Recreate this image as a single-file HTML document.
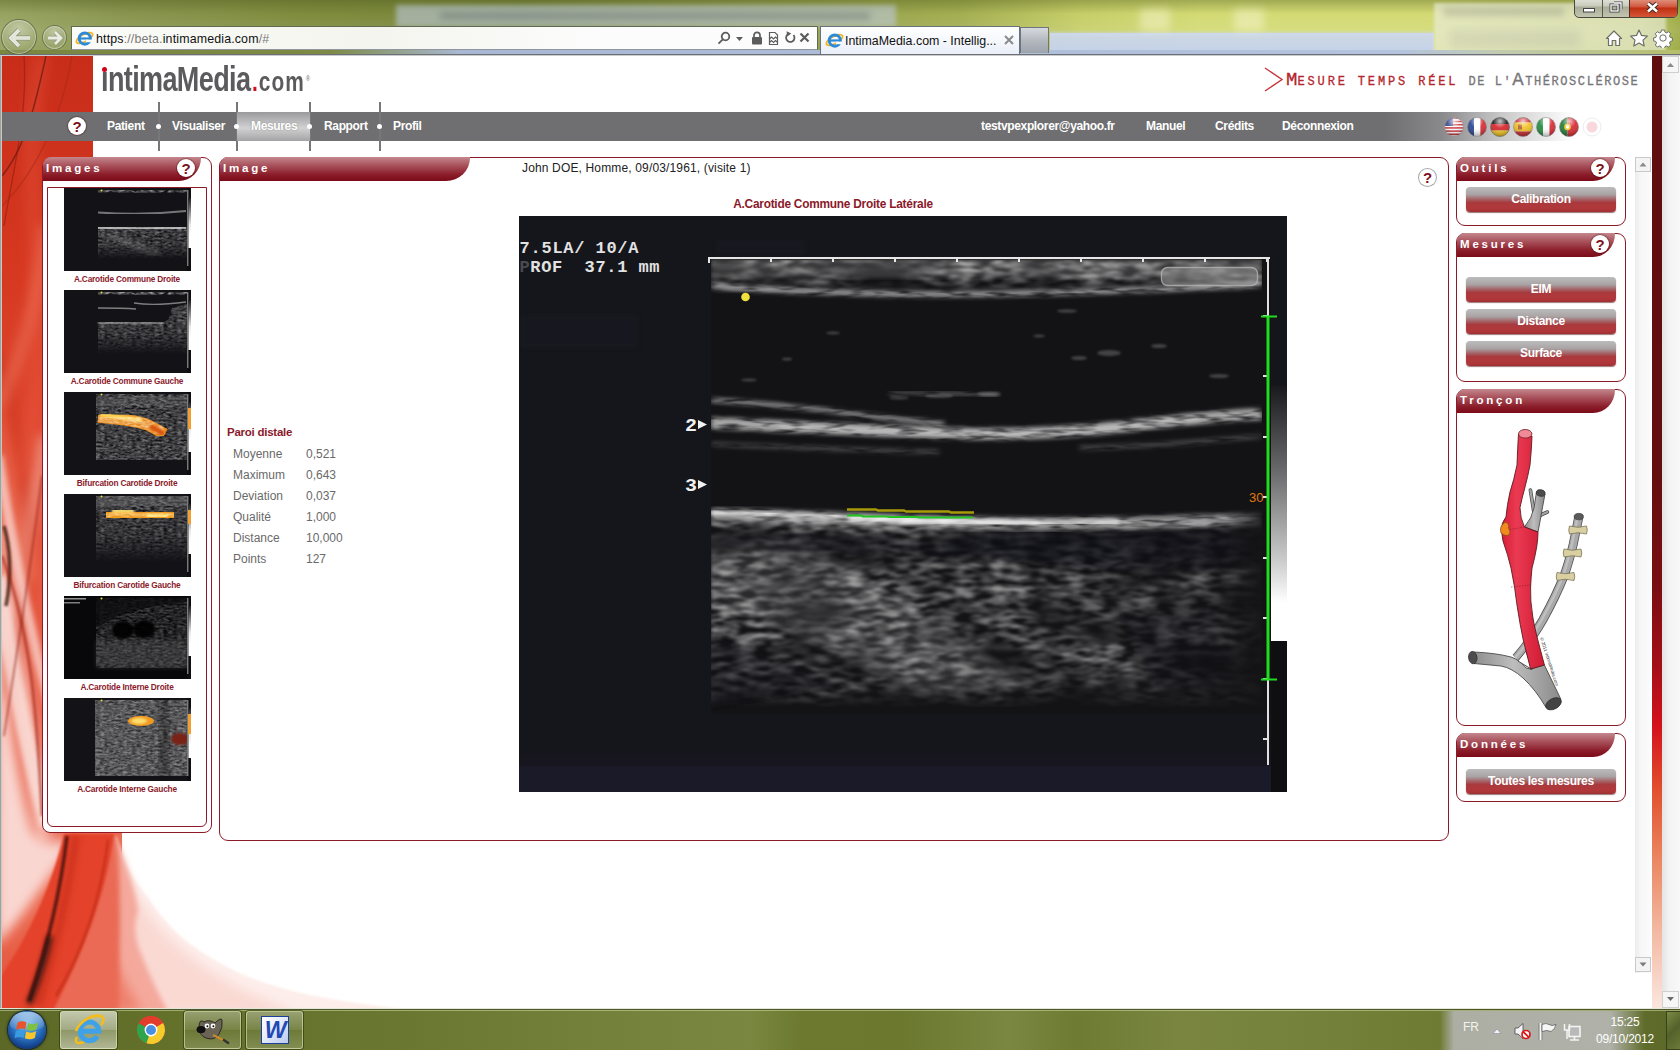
<!DOCTYPE html>
<html lang="fr">
<head>
<meta charset="utf-8">
<title>IntimaMedia.com - Intelligence</title>
<style>
html,body{margin:0;padding:0;}
body{width:1680px;height:1050px;overflow:hidden;position:relative;background:#7d8a3c;font-family:"Liberation Sans",sans-serif;}
.abs{position:absolute;}
#desk{left:0;top:0;width:1680px;height:56px;background:linear-gradient(90deg,#98a462 0px,#8a9650 120px,#7f8c3e 300px,#77853a 520px,#8f9a48 760px,#a3ae52 960px,#c6ce68 1080px,#d3da74 1200px,#d3da74 1430px,#bcc65e 1640px,#9eab48 1680px);}
#deskshade{left:0;top:0;width:1680px;height:56px;background:linear-gradient(180deg,rgba(70,80,20,.35) 0px,rgba(255,255,255,0) 14px,rgba(255,255,255,.08) 30px,rgba(255,255,255,0) 56px);}
#page{left:2px;top:56px;width:1650px;height:952px;background:#fff;overflow:hidden;}
#nav{left:2px;top:112px;width:1572px;height:29px;background:linear-gradient(90deg,#6f6f71 0px,#6f6f71 1383px,#8a8a8c 1440px,#c9c9ca 1500px,#ffffff 1572px);}
.navt{position:absolute;top:119px;color:#fff;font-weight:bold;font-size:12px;white-space:nowrap;letter-spacing:-0.35px;}
.sep{position:absolute;top:102px;width:2px;height:49px;background:#77777a;}
.dot{position:absolute;top:124px;width:5px;height:5px;border-radius:3px;background:#fff;}
.qm{position:absolute;width:18px;height:18px;border-radius:10px;background:#fff;color:#7d0f1d;font-weight:bold;font-size:15px;line-height:19px;text-align:center;box-shadow:0 0 1px 1px rgba(60,0,0,.35);}
.phead{position:absolute;height:24px;background:linear-gradient(180deg,#c4878d 0%,#a9525c 35%,#8a1b28 75%,#7b0b18 100%);color:#fff;font-weight:bold;font-size:11.500px;letter-spacing:2.800px;line-height:22px;padding-left:3px;box-sizing:border-box;white-space:nowrap;}
.panel{position:absolute;border:1px solid #8e1a28;background:#fff;box-sizing:border-box;}
.btn{position:absolute;height:25px;border-radius:4px;background:linear-gradient(180deg,#bcbcbc 0%,#a9a3a4 30%,#a56064 50%,#a83a3e 62%,#b1383b 85%,#a03034 100%);color:#fff;font-weight:bold;font-size:12px;line-height:24px;text-align:center;box-shadow:0 1px 1px rgba(90,30,30,.6);letter-spacing:-0.3px;}
.cap{position:absolute;left:0;width:160px;text-align:center;color:#8b1a2b;font-weight:bold;font-size:8.300px;letter-spacing:-0.200px;white-space:nowrap;}
.thumb{position:absolute;left:17px;width:127px;height:83px;background:#121216;overflow:hidden;}
.lbl{position:absolute;color:#6a6a6a;font-size:12px;white-space:nowrap;}
#task{left:0;top:1008px;width:1680px;height:42px;background:linear-gradient(90deg,#5c6826 0px,#63702a 150px,#6a7730 400px,#727f39 560px,#7a8740 750px,#6c792f 800px,#6b782e 900px,#7a8741 1010px,#6e7b32 1075px,#7a8640 1180px,#75823b 1300px,#6e7b33 1440px,#66732e 1560px,#5c6828 1680px);}
.tbtn{position:absolute;top:3px;width:57px;height:38px;border-radius:3px;border:1px solid rgba(230,240,190,.55);box-sizing:border-box;background:linear-gradient(180deg,rgba(255,255,255,.32),rgba(255,255,255,.12) 50%,rgba(255,255,255,.05) 51%,rgba(255,255,255,.18));box-shadow:0 0 0 1px rgba(40,50,10,.6);}
</style>
</head>
<body>
<svg width="0" height="0" style="position:absolute">
<defs>
<filter id="spk" x="0" y="0" width="100%" height="100%" color-interpolation-filters="sRGB">
<feTurbulence type="fractalNoise" baseFrequency="0.09 0.32" numOctaves="2" seed="7" result="n"/>
<feColorMatrix in="n" type="matrix" values="0 0 0 0 0  0 0 0 0 0  0 0 0 0 0  2.6 2.2 0 0 -1.85" result="a"/>
<feFlood flood-color="#e8e8e8"/><feComposite in2="a" operator="in" result="sp"/>
<feComposite in="sp" in2="SourceGraphic" operator="in"/>
</filter>
<filter id="spkT" x="0" y="0" width="100%" height="100%" color-interpolation-filters="sRGB">
<feTurbulence type="fractalNoise" baseFrequency="0.22 0.5" numOctaves="2" seed="3" result="n"/>
<feColorMatrix in="n" type="matrix" values="0 0 0 0 1  0 0 0 0 1  0 0 0 0 1  1.5 1.0 0 0 -0.78" result="a"/>
<feGaussianBlur in="a" stdDeviation=".55 .4" result="ab"/>
<feComposite in="ab" in2="SourceGraphic" operator="in"/>
</filter>
<filter id="b1"><feGaussianBlur stdDeviation="1"/></filter>
<filter id="b2"><feGaussianBlur stdDeviation="2"/></filter>
<filter id="b05"><feGaussianBlur stdDeviation=".6"/></filter>
<linearGradient id="gbar" x1="0" y1="0" x2="0" y2="1"><stop offset="0" stop-color="#1c1c20"/><stop offset=".7" stop-color="#e8e8e8"/><stop offset="1" stop-color="#fff"/></linearGradient>
<linearGradient id="fadeV" x1="0" y1="0" x2="0" y2="1"><stop offset="0" stop-color="#fff" stop-opacity=".95"/><stop offset=".6" stop-color="#fff" stop-opacity=".7"/><stop offset="1" stop-color="#fff" stop-opacity="0"/></linearGradient>
</defs>
</svg>
<!-- DESKTOP / AERO GLASS -->
<div id="desk" class="abs"></div>
<div id="deskshade" class="abs"></div>
<!-- BROWSER CHROME -->
<div class="abs" style="left:396px;top:5px;width:500px;height:22px;background:rgba(190,202,222,.6);filter:blur(2.500px);"></div>
<div class="abs" style="left:440px;top:12px;width:430px;height:8px;background:rgba(70,80,90,.28);filter:blur(3px);"></div>
<div class="abs" style="left:1050px;top:33px;width:384px;height:20px;background:linear-gradient(180deg,rgba(205,216,236,.9),rgba(196,210,234,1));"></div>
<div class="abs" style="left:1050px;top:30px;width:384px;height:6px;background:linear-gradient(180deg,rgba(205,216,236,0),rgba(205,216,236,.9));"></div>
<div class="abs" style="left:1434px;top:3px;width:232px;height:50px;background:rgba(236,238,226,.62);filter:blur(1.500px);"></div>
<div class="abs" style="left:1444px;top:8px;width:120px;height:8px;background:rgba(120,120,110,.28);filter:blur(3px);"></div>
<div class="abs" style="left:1450px;top:30px;width:130px;height:18px;background:rgba(170,170,160,.22);filter:blur(4px);"></div>
<div class="abs" style="left:1140px;top:9px;width:30px;height:22px;background:rgba(250,250,220,.45);filter:blur(4px);"></div>
<div class="abs" style="left:1234px;top:9px;width:30px;height:22px;background:rgba(250,250,220,.45);filter:blur(4px);"></div>
<div class="abs" style="left:0;top:50px;width:1680px;height:4px;background:linear-gradient(90deg,#7a8740 0,#7d8a44 330px,#a9b8d2 460px,#b4c3de 1400px,#c2cbb0 1500px,#b4be6a 1680px);"></div>
<div class="abs" style="left:0;top:54px;width:1680px;height:1px;background:#6c7076;"></div>
<div class="abs" style="left:0;top:55px;width:1680px;height:1px;background:#c9cbcd;"></div>
<div class="abs" style="left:0;top:56px;width:2px;height:952px;background:linear-gradient(90deg,#8d8f8a,#d9dbd8);"></div>
<!-- back / forward -->
<div class="abs" style="left:1px;top:19px;width:36px;height:36px;border-radius:18px;border:1px solid rgba(60,70,40,.55);box-sizing:border-box;background:radial-gradient(circle at 50% 25%,rgba(235,240,230,.45),rgba(160,172,130,.35) 70%);box-shadow:inset 0 0 0 1px rgba(255,255,255,.35);"></div>
<svg class="abs" style="left:8px;top:28px" width="24" height="20" viewBox="0 0 24 20"><path d="M11 2 L3 10 L11 18 M3.5 10 H22" fill="none" stroke="#8c9478" stroke-width="5.500" stroke-linejoin="miter" opacity=".8"/><path d="M11 2 L3 10 L11 18 M3.5 10 H22" fill="none" stroke="#e9ece2" stroke-width="3.600" stroke-linejoin="miter"/><path d="M11 2 L3 10 L11 18 M3.5 10 H22" fill="none" stroke="#c9cfc0" stroke-width="1" opacity=".5"/></svg>
<div class="abs" style="left:42px;top:25px;width:25px;height:25px;border-radius:13px;border:1px solid rgba(60,70,40,.5);box-sizing:border-box;background:radial-gradient(circle at 50% 25%,rgba(235,240,230,.45),rgba(160,172,130,.35) 70%);box-shadow:inset 0 0 0 1px rgba(255,255,255,.35);"></div>
<svg class="abs" style="left:46px;top:30px" width="18" height="16" viewBox="0 0 18 16"><path d="M9 2 L15 8 L9 14 M14.5 8 H2" fill="none" stroke="#8c9478" stroke-width="4.400" opacity=".8"/><path d="M9 2 L15 8 L9 14 M14.5 8 H2" fill="none" stroke="#e9ece2" stroke-width="2.800"/></svg>
<!-- address bar -->
<div class="abs" style="left:71px;top:26px;width:747px;height:24px;box-sizing:border-box;border:1px solid #5f6a52;border-bottom-color:#8e96a0;background:linear-gradient(90deg,#fbfbf8 0,#f4f5ee 300px,#fcfcfc 520px,#fdfdfd 747px);"></div>
<svg class="abs" style="left:75px;top:29px" width="19" height="18" viewBox="0 0 19 18"><ellipse cx="9.5" cy="9" rx="9" ry="3.6" transform="rotate(-28 9.5 9)" fill="none" stroke="#f2b620" stroke-width="1.8"/><circle cx="9.8" cy="9.6" r="5.6" fill="none" stroke="#2c8ad8" stroke-width="3"/><rect x="5" y="8.4" width="10" height="2.2" fill="#2c8ad8"/><rect x="11" y="10.6" width="6" height="2.6" fill="#fbfbf8"/></svg>
<div class="abs" style="left:96px;top:32px;font-size:12.400px;color:#7a7a7a;white-space:nowrap;letter-spacing:.15px;"><span style="color:#111">https</span>://beta.<span style="color:#111">intimamedia.com</span>/#</div>
<svg class="abs" style="left:716px;top:30px" width="100" height="16" viewBox="0 0 100 16"><g fill="none" stroke="#5c5c5c" stroke-width="1.8"><circle cx="9.5" cy="6.5" r="3.8"/><path d="M6.8 9.3 L2.5 13.6"/></g><path d="M20 7 h7 l-3.5 4z" fill="#5c5c5c"/><rect x="36" y="7" width="10" height="7.5" rx="1" fill="#5c5c5c"/><path d="M38 7 V5.3 a3 3 0 0 1 6 0 V7" fill="none" stroke="#5c5c5c" stroke-width="1.7"/><path d="M53.500 2.500 h5.500 l2.500 2.500 v9.500 h-8z" fill="#fff" stroke="#5c5c5c" stroke-width="1.2"/><path d="M53.500 9 l2-2 2 2 2-2 1.500 1.500 M53.500 12.500 l2-2 2 2 2-2 1.500 1.500" fill="none" stroke="#5c5c5c" stroke-width="1.200"/><path d="M77.500 5 a4.200 4.200 0 1 1 -4.800 -1.200" fill="none" stroke="#5c5c5c" stroke-width="1.800"/><path d="M70.500 1.200 l4.800 2.300 -4 3z" fill="#5c5c5c"/><path d="M84.500 3.500 l8 8 M92.500 3.500 l-8 8" stroke="#5c5c5c" stroke-width="2.200" fill="none"/></svg>
<!-- tab -->
<div class="abs" style="left:820px;top:26px;width:200px;height:28px;box-sizing:border-box;border:1px solid #6a7280;border-bottom:0;background:linear-gradient(180deg,#ffffff,#f3f6fb 60%,#e9eef7);"></div>
<svg class="abs" style="left:825px;top:31px" width="19" height="18" viewBox="0 0 19 18"><ellipse cx="9.500" cy="9" rx="9" ry="3.600" transform="rotate(-28 9.500 9)" fill="none" stroke="#f2b620" stroke-width="1.800"/><circle cx="9.800" cy="9.600" r="5.600" fill="none" stroke="#2c8ad8" stroke-width="3"/><rect x="5" y="8.400" width="10" height="2.200" fill="#2c8ad8"/><rect x="11" y="10.600" width="6" height="2.600" fill="#f8fafd"/></svg>
<div class="abs" style="left:845px;top:34px;font-size:12.400px;color:#111;white-space:nowrap;letter-spacing:0;">IntimaMedia.com - Intellig...</div>
<svg class="abs" style="left:1003px;top:34px" width="12" height="12" viewBox="0 0 12 12"><path d="M2 2 l8 8 M10 2 l-8 8" stroke="#8a8a8a" stroke-width="2" fill="none"/></svg>
<div class="abs" style="left:1020px;top:27px;width:29px;height:26px;box-sizing:border-box;border:1px solid #6e747c;border-bottom:0;background:linear-gradient(180deg,#d6dadf,#b4b9c0 50%,#9ea4ac);"></div>
<!-- window buttons -->
<div class="abs" style="left:1574px;top:-4px;width:104px;height:22px;box-sizing:border-box;border:1px solid #4a4a3c;border-radius:0 0 5px 5px;background:linear-gradient(180deg,#e8e9e0,#c9cbbd 45%,#a9ad98 50%,#c2c5b0);overflow:hidden;">
 <div class="abs" style="left:27px;top:0;width:1px;height:22px;background:#5a5a4a;"></div>
 <div class="abs" style="left:54px;top:0;width:50px;height:22px;border-left:1px solid #5a2a20;background:linear-gradient(180deg,#e3a795,#d2563c 45%,#bf2e12 50%,#d9603f);"></div>
</div>
<svg class="abs" style="left:1574px;top:0" width="104" height="18" viewBox="0 0 104 18"><rect x="9.500" y="8.500" width="11" height="3.500" fill="#fff" stroke="#444" stroke-width="1"/><g fill="none" stroke="#444" stroke-width="3"><rect x="37" y="5" width="7" height="6"/><path d="M40 3 h7 v6"/></g><g fill="none" stroke="#fff" stroke-width="1.300"><rect x="37" y="5" width="7" height="6"/><path d="M40 3 h7 v6"/></g><path d="M74 3.500 l9 8 M83 3.500 l-9 8" stroke="#3d2a25" stroke-width="4.500"/><path d="M74 3.500 l9 8 M83 3.500 l-9 8" stroke="#fff" stroke-width="2.600"/></svg>
<!-- home / star / gear -->
<svg class="abs" style="left:1604px;top:28px" width="70" height="20" viewBox="0 0 70 20"><g fill="#fff" stroke="#6b6f66" stroke-width="1.200" stroke-linejoin="round"><path d="M2.500 10.500 L10 3 L17.500 10.500 H15.500 V17.500 H11.800 V12.500 H8.200 V17.500 H4.500 V10.500 Z"/><path d="M35 2 l2.500 5.400 5.900 .700 -4.400 4 1.200 5.900 -5.200-3 -5.200 3 1.200-5.900 -4.400-4 5.900-.700z"/></g><g transform="translate(59 10)"><g fill="#fff" stroke="#6b6f66" stroke-width="1"><path d="M-1.500-8h3l.5 2.200 1.700.7 1.900-1.200 2.100 2.100-1.200 1.900.7 1.700 2.200.5v3l-2.200.5-.7 1.700 1.200 1.900-2.100 2.100-1.900-1.200-1.700.7-.5 2.200h-3l-.5-2.200-1.700-.7-1.900 1.200-2.100-2.100 1.200-1.900-.7-1.700-2.200-.5v-3l2.200-.5.7-1.700-1.200-1.900 2.100-2.100 1.900 1.200 1.700-.7z"/><circle r="3.200"/></g></g></svg>

<!-- PAGE -->
<div id="page" class="abs"><div class="abs" style="left:-2px;top:-56px;width:1680px;height:1050px;">
<!-- LEFT RED DECORATION -->
<svg class="abs" style="left:2px;top:56px" width="700" height="952" viewBox="0 0 700 952">
<defs>
<linearGradient id="lg1" gradientUnits="userSpaceOnUse" x1="0" y1="0" x2="0" y2="800"><stop offset="0" stop-color="#c82d1a"/><stop offset=".25" stop-color="#d5371f"/><stop offset=".5" stop-color="#e04a32"/><stop offset=".72" stop-color="#e65a42"/><stop offset=".9" stop-color="#e9654d"/><stop offset="1" stop-color="#ea6a52"/></linearGradient>
<linearGradient id="lg3" gradientUnits="userSpaceOnUse" x1="0" y1="760" x2="0" y2="952"><stop offset="0" stop-color="#ea6a52"/><stop offset=".5" stop-color="#ea6a52"/><stop offset=".8" stop-color="#e65a42"/><stop offset="1" stop-color="#e4503a"/></linearGradient>
<radialGradient id="rg1" gradientUnits="userSpaceOnUse" cx="520" cy="560" r="470"><stop offset="0" stop-color="#fff" stop-opacity="1"/><stop offset=".86" stop-color="#fff" stop-opacity="1"/><stop offset=".9" stop-color="#fdeeeb"/><stop offset="1" stop-color="#f7c9c1"/></radialGradient>
<filter id="bl6" filterUnits="userSpaceOnUse" x="-50" y="-50" width="800" height="1100"><feGaussianBlur stdDeviation="6"/></filter>
<filter id="bl3" filterUnits="userSpaceOnUse" x="-50" y="-50" width="800" height="1100"><feGaussianBlur stdDeviation="2.500"/></filter>
<filter id="bl1" filterUnits="userSpaceOnUse" x="-50" y="-50" width="800" height="1100"><feGaussianBlur stdDeviation="1.200"/></filter>
<filter id="bl14" filterUnits="userSpaceOnUse" x="-50" y="-50" width="800" height="1100"><feGaussianBlur stdDeviation="12"/></filter>
<clipPath id="lclip"><rect x="0" y="0" width="700" height="952"/></clipPath>
</defs>
<g clip-path="url(#lclip)">
<rect x="0" y="0" width="91" height="800" fill="url(#lg1)"/>
<rect x="0" y="760" width="120" height="192" fill="url(#lg3)"/>
<!-- crossing light / dark streaks in strip -->
<path d="M-5 470 C10 560 25 650 42 790" stroke="#f9d2cb" stroke-width="16" fill="none" opacity=".7" filter="url(#bl6)"/>
<path d="M-6 540 C4 640 14 720 30 775 C40 790 52 790 62 780 L64 800 C40 830 20 862 -6 890Z" fill="#fbe0db" opacity=".92" filter="url(#bl6)"/>
<path d="M42 380 C30 470 10 540 -6 600" stroke="#f6b9ae" stroke-width="12" fill="none" opacity=".6" filter="url(#bl6)"/>
<path d="M0 300 C30 420 30 520 8 640" stroke="#b3200f" stroke-width="8" fill="none" opacity=".35" filter="url(#bl6)"/>
<path d="M40 0 C10 120 60 250 20 420" stroke="#ee5e46" stroke-width="16" fill="none" opacity=".3" filter="url(#bl6)"/>
<path d="M44 170 C36 250 20 300 -4 350" stroke="#f07a62" stroke-width="12" fill="none" opacity=".55" filter="url(#bl6)"/>
<path d="M-6 330 C6 400 22 450 36 520 L-6 560Z" fill="#f08068" opacity=".45" filter="url(#bl6)"/>
<path d="M22 0 C26 60 10 120 2 170" stroke="#8a1a0e" stroke-width="1.300" fill="none" opacity=".55"/>
<path d="M0 120 C25 90 35 40 44 0" stroke="#6a1a10" stroke-width="1.500" fill="none" opacity=".7"/>
<path d="M0 150 C40 110 62 50 70 0" stroke="#a52a18" stroke-width="1.200" fill="none" opacity=".6"/>
<path d="M-4 400 C10 490 28 575 48 650" stroke="#fad8d2" stroke-width="10" fill="none" opacity=".75" filter="url(#bl3)"/>
<path d="M-4 520 C8 610 24 690 46 770" stroke="#fbe2dd" stroke-width="16" fill="none" opacity=".8" filter="url(#bl3)"/>
<path d="M2 470 C8 490 10 520 4 550" stroke="#2a0a06" stroke-width="3.500" fill="none" opacity=".75" filter="url(#bl1)"/>
<path d="M0 500 C30 580 35 660 40 760" stroke="#9a1c0e" stroke-width="3" fill="none" opacity=".55" filter="url(#bl1)"/>
<path d="M40 420 C28 520 14 600 2 680" stroke="#8a180c" stroke-width="2" fill="none" opacity=".5" filter="url(#bl1)"/>
<!-- bottom swoosh -->
<path d="M115 781 C122 810 134 826 146 842 C160 862 172 876 188 888 C210 904 232 916 260 926 C290 936 320 942 355 947 L420 956 L100 960 L100 781Z" fill="#fdeeeb" filter="url(#bl1)"/>
<path d="M115 790 C126 826 140 850 160 874 C185 900 215 922 250 938 L300 960 L100 960Z" fill="#fad9d3" filter="url(#bl6)"/>
<path d="M114 781 C126 815 134 835 136 855 C132 870 132 880 140 900 C150 925 158 940 166 956 L100 956Z" fill="#f4a99c" filter="url(#bl3)"/>
<path d="M110 900 C120 920 130 940 140 956 L100 956Z" fill="#ee806c" filter="url(#bl6)"/>
<path d="M103 778 L115 778 C119 830 118 880 117 956 L48 956 C76 900 94 840 103 778Z" fill="#ea6a55" filter="url(#bl3)"/>
<path d="M62 778 L112 778 C104 840 80 900 50 956 L-4 956 L-4 925 C26 880 48 835 62 778Z" fill="#e4432b" filter="url(#bl1)"/>
<path d="M106 784 C98 850 78 900 54 940" stroke="#a3200f" stroke-width="1.800" fill="none" opacity=".6" filter="url(#bl1)"/>
<path d="M74 780 C66 840 52 895 36 950" stroke="#c22a14" stroke-width="9" fill="none" opacity=".5" filter="url(#bl3)"/>
<path d="M65 780 C58 840 44 895 27 945" stroke="#3a0e08" stroke-width="3.500" fill="none" opacity=".8" filter="url(#bl1)"/>
<path d="M48 880 C43 905 36 925 27 948" stroke="#1a0a08" stroke-width="6" fill="none" opacity=".8" filter="url(#bl3)"/>
</g>
</svg>
<div id="nav" class="abs"></div>
<!-- LOGO -->
<div class="abs" style="left:101px;top:59px;color:#5b5b5d;font-weight:bold;white-space:nowrap;transform-origin:0 0;transform:scaleX(.772);line-height:40px;font-size:35px;letter-spacing:-.8px;">ıntimaMedia<span style="font-size:27px;letter-spacing:1.4px;margin-left:2px;"><span style="color:#cf1020;">.</span>com</span><span style="font-size:8px;letter-spacing:0;position:relative;top:-10px;left:1px;font-weight:normal;color:#777;">®</span></div>
<div class="abs" style="left:102px;top:67px;width:5px;height:5px;border-radius:3px;background:#d0021b;"></div>
<!-- TAGLINE -->
<svg class="abs" style="left:1262px;top:66px" width="24" height="28" viewBox="0 0 24 28"><path d="M3 2 L20 13.500 L3 25" fill="none" stroke="#c8323a" stroke-width="1.400"/></svg>
<div class="abs" style="left:1286px;top:70px;font-family:'Liberation Mono',monospace;white-space:nowrap;color:#b3262e;font-size:12px;letter-spacing:2.850px;line-height:20px;-webkit-text-stroke:.3px currentColor;"><span style="font-size:19px;letter-spacing:.1px;">M</span>ESURE TEMPS RÉEL <span style="color:#77777a;letter-spacing:1.570px;">DE L'<span style="font-size:19px;">A</span>THÉROSCLÉROSE</span></div>
<!-- NAV ITEMS -->
<div class="sep" style="left:158px"></div><div class="sep" style="left:236px"></div><div class="sep" style="left:309px"></div><div class="sep" style="left:379px"></div>
<div class="abs" style="left:237px;top:112px;width:73px;height:29px;background:linear-gradient(180deg,#9a9a9c,#c7c7c9 45%,#d2d2d3 55%,#a3a3a5);"></div>
<div class="dot" style="left:156px"></div><div class="dot" style="left:234px"></div><div class="dot" style="left:307px"></div><div class="dot" style="left:377px"></div>
<div class="qm" style="left:68px;top:117px;">?</div>
<div class="navt" style="left:107px">Patient</div>
<div class="navt" style="left:172px">Visualiser</div>
<div class="navt" style="left:251px;text-shadow:0 0 2px #888;">Mesures</div>
<div class="navt" style="left:324px">Rapport</div>
<div class="navt" style="left:393px">Profil</div>
<div class="navt" style="left:981px">testvpexplorer@yahoo.fr</div>
<div class="navt" style="left:1146px">Manuel</div>
<div class="navt" style="left:1215px">Crédits</div>
<div class="navt" style="left:1282px">Déconnexion</div>
<!-- FLAGS -->
<svg class="abs" style="left:1442px;top:115px" width="164" height="24" viewBox="0 0 164 24">
<defs>
<clipPath id="fc"><circle cx="12" cy="12" r="9.500"/></clipPath>
<radialGradient id="gl" cx=".5" cy=".2" r=".8"><stop offset="0" stop-color="#fff" stop-opacity=".75"/><stop offset=".45" stop-color="#fff" stop-opacity=".1"/><stop offset="1" stop-color="#000" stop-opacity=".35"/></radialGradient>
</defs>
<g clip-path="url(#fc)"><rect x="2" y="2" width="20" height="20" fill="#fff"/><g fill="#c8343c"><rect x="2" y="2.500" width="20" height="1.600"/><rect x="2" y="5.700" width="20" height="1.600"/><rect x="2" y="8.900" width="20" height="1.600"/><rect x="2" y="12.100" width="20" height="1.600"/><rect x="2" y="15.300" width="20" height="1.600"/><rect x="2" y="18.500" width="20" height="1.600"/></g><rect x="2" y="2" width="9" height="9" fill="#3a4a8c"/></g><circle cx="12" cy="12" r="9.500" fill="url(#gl)" stroke="#8a8a8a" stroke-width=".600"/>
<g transform="translate(23 0)"><g clip-path="url(#fc)"><rect x="2" y="2" width="7" height="20" fill="#24408e"/><rect x="9" y="2" width="6.500" height="20" fill="#fff"/><rect x="15.500" y="2" width="7" height="20" fill="#d8242c"/></g><circle cx="12" cy="12" r="9.500" fill="url(#gl)" stroke="#8a8a8a" stroke-width=".600"/></g>
<g transform="translate(46 0)"><g clip-path="url(#fc)"><rect x="2" y="2" width="20" height="7" fill="#1a1a1a"/><rect x="2" y="9" width="20" height="6.500" fill="#d41f26"/><rect x="2" y="15.500" width="20" height="7" fill="#f2c41c"/></g><circle cx="12" cy="12" r="9.500" fill="url(#gl)" stroke="#6a6a6a" stroke-width=".600"/></g>
<g transform="translate(69 0)"><g clip-path="url(#fc)"><rect x="2" y="2" width="20" height="5.500" fill="#c8242c"/><rect x="2" y="7.500" width="20" height="9" fill="#f2c020"/><rect x="2" y="16.500" width="20" height="6" fill="#c8242c"/><rect x="7" y="9.500" width="4" height="5" fill="#b0602c"/></g><circle cx="12" cy="12" r="9.500" fill="url(#gl)" stroke="#8a8a8a" stroke-width=".600"/></g>
<g transform="translate(92 0)"><g clip-path="url(#fc)"><rect x="2" y="2" width="7" height="20" fill="#1f8a3c"/><rect x="9" y="2" width="6.500" height="20" fill="#fff"/><rect x="15.500" y="2" width="7" height="20" fill="#d8242c"/></g><circle cx="12" cy="12" r="9.500" fill="url(#gl)" stroke="#8a8a8a" stroke-width=".600"/></g>
<g transform="translate(115 0)"><g clip-path="url(#fc)"><rect x="2" y="2" width="8.500" height="20" fill="#1f7a34"/><rect x="10.500" y="2" width="12" height="20" fill="#d8242c"/><circle cx="10.500" cy="12" r="3.300" fill="#f2c820"/><circle cx="10.500" cy="12" r="1.700" fill="#fff"/></g><circle cx="12" cy="12" r="9.500" fill="url(#gl)" stroke="#8a8a8a" stroke-width=".600"/></g>
<g transform="translate(138 0)"><circle cx="12" cy="12" r="9" fill="#fff" stroke="#ececec" stroke-width="1"/><circle cx="12" cy="12" r="5.500" fill="#f8d8dc"/></g>
</svg>

<!-- LEFT PANEL : IMAGES -->
<div class="panel" style="left:42px;top:157px;width:170px;height:676px;border-radius:9px 9px 8px 8px;"></div>
<div class="phead" style="left:43px;top:157px;width:158px;border-radius:8px 0 22px 0/8px 0 23px 0;">Images</div>
<div class="qm" style="left:177px;top:159px;">?</div>
<div class="panel" style="left:47px;top:187px;width:160px;height:640px;border-radius:0 0 6px 6px;overflow:hidden;"><div class="abs" style="left:-1px;top:0px;width:160px;height:640px;">
<div class="thumb" style="top:0px"><svg width="127" height="83" viewBox="0 0 127 83"><rect width="127" height="83" fill="#131317"/>
<rect x="34" y="39" width="89" height="32" fill="url(#fadeV)" filter="url(#spkT)" opacity=".42"/>
<rect x="34" y="2" width="89" height="2.500" fill="#fff" filter="url(#spkT)" opacity=".5"/>
<path d="M34 24.500 Q80 27.500 122 23" stroke="#c8c8c8" stroke-width="2" fill="none" filter="url(#b05)" opacity=".55"/>
<path d="M34 39.500 Q75 41.500 122 39.500" stroke="#e6e6e6" stroke-width="2.600" fill="none" filter="url(#b05)" opacity=".7"/>
<path d="M40 46 L95 66" stroke="#ddd" stroke-width="7" fill="none" filter="url(#b2)" opacity=".16"/>
<circle cx="37.500" cy="2.500" r="1" fill="#e8e040"/><rect x="123" y="0" width="4" height="83" fill="#0e0e10"/><rect x="123.300" y="2" width="1" height="76" fill="#a8a8a8"/><rect x="124.500" y="10" width="2.500" height="38" fill="url(#gbar)"/><rect x="124.500" y="48" width="2.500" height="12" fill="#fff"/></svg></div><div class="cap" style="top:86px">A.Carotide Commune Droite</div>
<div class="thumb" style="top:102px"><svg width="127" height="83" viewBox="0 0 127 83"><rect width="127" height="83" fill="#131317"/>
<path d="M34 32 H100 L104 30 L108 18 L123 14 V64 H34Z" fill="url(#fadeV)" filter="url(#spkT)" opacity=".45"/>
<rect x="34" y="2" width="89" height="2.500" fill="#fff" filter="url(#spkT)" opacity=".6"/>
<path d="M34 18 Q60 18 72 19 M70 13 Q90 16 122 12" stroke="#9a9a9a" stroke-width="1.300" fill="none" filter="url(#b05)" opacity=".8"/>
<path d="M34 33 Q70 32 100 33" stroke="#d8d8d8" stroke-width="2.600" fill="none" filter="url(#b1)" opacity=".6"/>
<circle cx="37.500" cy="2.500" r="1" fill="#e8e040"/><rect x="123" y="0" width="4" height="83" fill="#0e0e10"/><rect x="123.300" y="2" width="1" height="76" fill="#a8a8a8"/><rect x="124.500" y="10" width="2.500" height="38" fill="url(#gbar)"/><rect x="124.500" y="48" width="2.500" height="12" fill="#fff"/></svg></div><div class="cap" style="top:188px">A.Carotide Commune Gauche</div>
<div class="thumb" style="top:204px"><svg width="127" height="83" viewBox="0 0 127 83"><rect width="127" height="83" fill="#131317"/>
<rect x="32" y="2" width="91" height="66" fill="#fff" filter="url(#spkT)" opacity=".4"/>
<rect x="32" y="4" width="91" height="10" fill="#8a8a8a" opacity=".22"/>
<path d="M34 25 C55 27 72 28 84 33 L101 42" stroke="#e88a1c" stroke-width="11.500" fill="none" filter="url(#b05)"/>
<path d="M36 23 C55 25 68 26 78 29" stroke="#ffd45a" stroke-width="4.500" fill="none" filter="url(#b1)"/>
<path d="M34 25 C55 27 72 28 84 33 L101 42" stroke="#a03008" stroke-width="10" fill="none" filter="url(#spkT)" opacity=".55"/>
<path d="M86 34 L100 42" stroke="#d85410" stroke-width="5" fill="none" filter="url(#b1)"/>
<circle cx="37.500" cy="2.500" r="1" fill="#e8e040"/><rect x="123" y="0" width="4" height="83" fill="#0e0e10"/><rect x="123.300" y="2" width="1" height="76" fill="#a8a8a8"/><rect x="124.500" y="10" width="2.500" height="38" fill="url(#gbar)"/><rect x="124.500" y="48" width="2.500" height="12" fill="#fff"/><rect x="124" y="16" width="3" height="21" fill="#f0a030"/></svg></div><div class="cap" style="top:290px">Bifurcation Carotide Droite</div>
<div class="thumb" style="top:306px"><svg width="127" height="83" viewBox="0 0 127 83"><rect width="127" height="83" fill="#131317"/>
<rect x="32" y="2" width="91" height="66" fill="url(#fadeV)" filter="url(#spkT)" opacity=".42"/>
<rect x="32" y="2" width="91" height="10" fill="#8a8a8a" opacity=".3"/>
<path d="M42 19 H72 L78 23 H110" stroke="#ee9a1c" stroke-width="11" fill="none" filter="url(#b05)"/>
<path d="M48 17 H70 M82 22 H104" stroke="#ffe070" stroke-width="4" fill="none" filter="url(#b1)"/>
<path d="M42 19 H72 L78 23 H110" stroke="#a03008" stroke-width="10" fill="none" filter="url(#spkT)" opacity=".45"/>
<circle cx="37.500" cy="2.500" r="1" fill="#e8e040"/><rect x="123" y="0" width="4" height="83" fill="#0e0e10"/><rect x="123.300" y="2" width="1" height="76" fill="#a8a8a8"/><rect x="124.500" y="10" width="2.500" height="38" fill="url(#gbar)"/><rect x="124.500" y="48" width="2.500" height="12" fill="#fff"/><rect x="124" y="16" width="3" height="14" fill="#f0a030"/></svg></div><div class="cap" style="top:392px">Bifurcation Carotide Gauche</div>
<div class="thumb" style="top:408px"><svg width="127" height="83" viewBox="0 0 127 83"><rect width="127" height="83" fill="#08080a"/>
<rect x="32" y="2" width="91" height="70" fill="#fff" filter="url(#spkT)" opacity=".24"/>
<rect x="32" y="44" width="91" height="28" fill="#888" filter="url(#b2)" opacity=".22"/>
<ellipse cx="59" cy="34" rx="11" ry="9" fill="#050506" filter="url(#b1)" opacity=".9"/><ellipse cx="80" cy="33" rx="11" ry="9" fill="#050506" filter="url(#b1)" opacity=".9"/>
<path d="M36 30 Q60 12 123 6 V2 H32 V30Z" fill="#0a0a0c" opacity=".7"/>
<rect x="0" y="2" width="22" height="1.500" fill="#cfcfcf" opacity=".7"/><rect x="0" y="6" width="16" height="1.500" fill="#cfcfcf" opacity=".6"/>
<circle cx="37.500" cy="2.500" r="1" fill="#e8e040"/><rect x="123" y="0" width="4" height="83" fill="#0e0e10"/><rect x="123.300" y="2" width="1" height="76" fill="#a8a8a8"/><rect x="124.500" y="10" width="2.500" height="38" fill="url(#gbar)"/><rect x="124.500" y="48" width="2.500" height="12" fill="#fff"/></svg></div><div class="cap" style="top:494px">A.Carotide Interne Droite</div>
<div class="thumb" style="top:510px"><svg width="127" height="83" viewBox="0 0 127 83"><rect width="127" height="83" fill="#131317"/>
<rect x="31" y="2" width="92" height="76" fill="#fff" filter="url(#spkT)" opacity=".5"/>
<rect x="31" y="2" width="92" height="76" fill="#777" opacity=".3"/>
<rect x="95" y="2" width="10" height="76" fill="#111" opacity=".35" filter="url(#b2)"/>
<ellipse cx="77" cy="23" rx="13" ry="5" fill="#f09a20" filter="url(#b05)"/><ellipse cx="75" cy="23" rx="8" ry="3" fill="#ffe070" filter="url(#b1)"/>
<ellipse cx="116" cy="41" rx="9" ry="6" fill="#7a2414" filter="url(#b1)"/>
<circle cx="37.500" cy="2.500" r="1" fill="#e8e040"/><rect x="123" y="0" width="4" height="83" fill="#0e0e10"/><rect x="123.300" y="2" width="1" height="76" fill="#a8a8a8"/><rect x="124.500" y="10" width="2.500" height="38" fill="url(#gbar)"/><rect x="124.500" y="48" width="2.500" height="12" fill="#fff"/><rect x="124" y="16" width="3" height="20" fill="#f0a030"/></svg></div><div class="cap" style="top:596px">A.Carotide Interne Gauche</div>
</div></div>

<!-- MAIN PANEL : IMAGE -->
<div class="panel" style="left:219px;top:157px;width:1230px;height:684px;border-radius:9px 9px 9px 9px;"></div>
<div class="phead" style="left:220px;top:157px;width:250px;border-radius:8px 0 24px 0/8px 0 23px 0;">Image</div>
<div class="abs" style="left:522px;top:161px;font-size:12px;color:#222;white-space:nowrap;letter-spacing:.15px;">John DOE, Homme, 09/03/1961, (visite 1)</div>
<div class="qm" style="left:1419px;top:169px;width:17px;height:17px;font-size:15px;line-height:18px;box-shadow:0 0 0 1px #a8a8a8;">?</div>
<div class="abs" style="left:633px;top:197px;width:400px;text-align:center;font-size:11.900px;font-weight:bold;color:#8b1a2b;white-space:nowrap;letter-spacing:-0.25px;">A.Carotide Commune Droite Latérale</div>
<div class="abs" style="left:227px;top:426px;font-size:11.500px;font-weight:bold;color:#8b1a2b;white-space:nowrap;letter-spacing:-0.25px;">Paroi distale</div>
<div class="lbl" style="left:233px;top:447px">Moyenne</div><div class="lbl" style="left:306px;top:447px">0,521</div>
<div class="lbl" style="left:233px;top:468px">Maximum</div><div class="lbl" style="left:306px;top:468px">0,643</div>
<div class="lbl" style="left:233px;top:489px">Deviation</div><div class="lbl" style="left:306px;top:489px">0,037</div>
<div class="lbl" style="left:233px;top:510px">Qualité</div><div class="lbl" style="left:306px;top:510px">1,000</div>
<div class="lbl" style="left:233px;top:531px">Distance</div><div class="lbl" style="left:306px;top:531px">10,000</div>
<div class="lbl" style="left:233px;top:552px">Points</div><div class="lbl" style="left:306px;top:552px">127</div>
<!--USBEGIN--><svg class="abs" style="left:519px;top:216px" width="768" height="576" viewBox="0 0 768 576" font-family="'Liberation Mono',monospace">
<defs>
<filter id="usn" x="0" y="0" width="100%" height="100%" color-interpolation-filters="sRGB">
<feTurbulence type="fractalNoise" baseFrequency="0.055 0.17" numOctaves="2" seed="11" result="n1"/>
<feColorMatrix in="n1" type="matrix" values="0 0 0 0 1  0 0 0 0 1  0 0 0 0 1  2.4 0 0 0 -0.78" result="a1"/>
<feTurbulence type="fractalNoise" baseFrequency="0.012 0.028" numOctaves="2" seed="5" result="n2"/>
<feColorMatrix in="n2" type="matrix" values="0 0 0 0 1  0 0 0 0 1  0 0 0 0 1  2.2 0 0 0 -0.35" result="a2"/>
<feComposite in="a1" in2="a2" operator="arithmetic" k1="1" k2="0" k3="0" k4="0" result="m"/>
<feGaussianBlur in="m" stdDeviation="1.6 1" result="mb"/>
<feComposite in="mb" in2="SourceGraphic" operator="in"/>
</filter>
<filter id="usw" x="-5%" y="-80%" width="110%" height="260%" color-interpolation-filters="sRGB">
<feTurbulence type="fractalNoise" baseFrequency="0.045 0.22" numOctaves="2" seed="21" result="n1"/>
<feColorMatrix in="n1" type="matrix" values="0 0 0 0 1  0 0 0 0 1  0 0 0 0 1  2.2 0 0 0 -0.25" result="a1"/>
<feGaussianBlur in="SourceGraphic" stdDeviation="2.4 1.9" result="sb"/>
<feComposite in="a1" in2="sb" operator="in" result="r"/>
<feGaussianBlur in="r" stdDeviation="1.1 .6"/>
</filter>
<linearGradient id="tis" x1="0" y1="0" x2="0" y2="1"><stop offset="0" stop-color="#fff" stop-opacity=".75"/><stop offset=".06" stop-color="#fff" stop-opacity=".5"/><stop offset=".14" stop-color="#fff" stop-opacity=".36"/><stop offset=".3" stop-color="#fff" stop-opacity=".55"/><stop offset=".75" stop-color="#fff" stop-opacity=".52"/><stop offset=".9" stop-color="#fff" stop-opacity=".36"/><stop offset="1" stop-color="#fff" stop-opacity="0"/></linearGradient>
<linearGradient id="topb" x1="0" y1="0" x2="0" y2="1"><stop offset="0" stop-color="#fff" stop-opacity=".75"/><stop offset=".45" stop-color="#fff" stop-opacity=".6"/><stop offset=".7" stop-color="#fff" stop-opacity=".3"/><stop offset="1" stop-color="#fff" stop-opacity="0"/></linearGradient>
<linearGradient id="gbar2" x1="0" y1="0" x2="0" y2="1"><stop offset="0" stop-color="#1a1a1e"/><stop offset=".35" stop-color="#6e6e70"/><stop offset=".7" stop-color="#d0d0d0"/><stop offset=".85" stop-color="#fff"/><stop offset="1" stop-color="#fff"/></linearGradient>
<linearGradient id="rfade" x1="0" y1="0" x2="1" y2="0"><stop offset="0" stop-color="#131315" stop-opacity="0"/><stop offset=".6" stop-color="#131315" stop-opacity=".55"/><stop offset="1" stop-color="#131315" stop-opacity=".85"/></linearGradient>
<clipPath id="usclip"><rect x="192" y="43" width="551" height="452"/></clipPath>
</defs>
<rect width="768" height="576" fill="#15161b"/>
<rect x="192" y="42" width="560" height="456" fill="#131315"/>
<rect x="0" y="0" width="768" height="42" fill="#15151c"/>
<rect x="0" y="550" width="768" height="26" fill="#1b1a28"/><rect x="0" y="538" width="768" height="12" fill="#17161f"/><rect x="1" y="99" width="118" height="33" fill="#1c1c27" opacity=".4" filter="url(#b2)"/><rect x="198" y="24" width="88" height="14" fill="#1c1c28" opacity=".4" filter="url(#b2)"/>

<g clip-path="url(#usclip)">
<!-- top tissue band -->
<rect x="192" y="44" width="551" height="34" fill="url(#topb)" filter="url(#usn)"/>
<rect x="192" y="42" width="551" height="20" fill="#9a9a9a" opacity=".28" filter="url(#b2)"/>
<path d="M192 70 Q330 80 470 78 T743 68" stroke="#fff" stroke-width="6" fill="none" filter="url(#usw)" opacity=".55"/>
<!-- scattered faint echoes in lumen region above near wall -->
<g fill="#fff" filter="url(#b1)" opacity=".2"><ellipse cx="314" cy="117" rx="7" ry="1.500"/><ellipse cx="548" cy="95" rx="10" ry="1.800"/><ellipse cx="590" cy="137" rx="12" ry="3"/><ellipse cx="640" cy="130" rx="8" ry="2"/><ellipse cx="560" cy="142" rx="8" ry="2"/><ellipse cx="268" cy="143" rx="5" ry="1.500"/><ellipse cx="230" cy="164" rx="8" ry="1.500"/><ellipse cx="420" cy="180" rx="14" ry="2"/><ellipse cx="470" cy="178" rx="12" ry="2"/><ellipse cx="380" cy="182" rx="10" ry="1.500"/><ellipse cx="700" cy="160" rx="10" ry="2"/><ellipse cx="520" cy="120" rx="6" ry="1.500"/></g>
<!-- thin line above near wall -->
<path d="M192 184 Q260 188 320 196 T425 207" stroke="#fff" stroke-width="5" fill="none" filter="url(#usw)" opacity=".5"/>
<path d="M370 178 Q420 176 480 179" stroke="#fff" stroke-width="3" fill="none" filter="url(#usw)" opacity=".35"/>
<!-- near wall -->
<path d="M192 207 C290 211 390 217 467 218 C530 218 570 214 610 210 C650 205 700 200 743 198" stroke="#fff" stroke-width="12" fill="none" filter="url(#usw)" opacity=".62"/>
<path d="M260 210 C330 213 400 217 467 218 C530 218 570 214 610 210 C640 206 660 204 680 202" stroke="#fff" stroke-width="3" fill="none" filter="url(#b2)" opacity=".4"/>
<path d="M192 228 Q300 233 420 236" stroke="#fff" stroke-width="5" fill="none" filter="url(#usw)" opacity=".2"/>
<path d="M560 232 Q640 230 743 220" stroke="#fff" stroke-width="5" fill="none" filter="url(#usw)" opacity=".2"/>
<!-- tissue below far wall -->
<path d="M192 295 C300 298 420 304 520 305 C600 305 680 302 743 300 V492 H192Z" fill="url(#tis)" filter="url(#usn)"/>
<path d="M470 312 Q600 318 743 306 V350 Q600 372 420 330Z" fill="#101012" opacity=".5" filter="url(#b2)"/>
<path d="M192 420 L330 470 L192 492Z" fill="#101012" opacity=".45" filter="url(#b2)"/>
<path d="M600 400 L743 380 V470 L640 480Z" fill="#101012" opacity=".4" filter="url(#b2)"/>
<path d="M192 320 L300 330 L520 470 L400 480 L192 380Z" fill="#d0d0d0" opacity=".12" filter="url(#b2)"/>
<rect x="560" y="300" width="190" height="200" fill="url(#rfade)" opacity=".55"/>
<path d="M192 313 C300 316 420 322 520 323 C600 323 680 320 743 318 V342 C600 350 400 346 192 334Z" fill="#101012" opacity=".3" filter="url(#b2)"/>
<!-- far wall bright -->
<path d="M192 298 C300 301 420 307 520 308 C600 308 680 305 743 303" stroke="#fff" stroke-width="13" fill="none" filter="url(#usw)" opacity=".5"/>
<path d="M192 296 C260 298 300 300 330 301 C400 304 460 306 520 307" stroke="#fff" stroke-width="4" fill="none" filter="url(#b2)" opacity=".55"/>
<path d="M330 302 C400 305 460 307 520 307 C550 307 570 306.500 600 306" stroke="#fff" stroke-width="5" fill="none" filter="url(#b2)" opacity=".75"/>
<rect x="700" y="230" width="45" height="270" fill="url(#rfade)"/>
</g>
<!-- label rect in top band -->
<rect x="642.500" y="51.500" width="96" height="18" rx="6" fill="#8a8a8a" fill-opacity=".55" stroke="#b4b4b4" stroke-opacity=".8" stroke-width="1.300" filter="url(#b05)"/>
<!-- rulers -->
<rect x="189" y="41" width="562" height="2" fill="#e6e6e6"/>
<path d="M190 43v4 M252 43v3 M314 43v3 M376 43v3 M438 43v3 M500 43v3 M562 43v3 M624 43v3 M686 43v3 M748 43v3" stroke="#e6e6e6" stroke-width="2"/>
<rect x="748" y="41" width="2" height="508" fill="#e0e0e0"/>
<path d="M744 100h5 M744 160h5 M744 221h5 M744 281h5 M744 342h5 M744 402h5 M744 463h5 M744 523h5" stroke="#e0e0e0" stroke-width="2"/>
<rect x="752" y="0" width="16" height="170" fill="#15161b"/><rect x="752" y="425" width="16" height="151" fill="#0f0f11"/>
<rect x="752" y="170" width="16" height="255" fill="url(#gbar2)"/>
<rect x="747.500" y="100" width="3" height="363" fill="#1fdc1f"/>
<path d="M742 100.500h16 M742 463.500h16" stroke="#1fdc1f" stroke-width="2"/>
<text x="730" y="286" font-family="'Liberation Sans',sans-serif" font-size="13" fill="#e07a10">30</text>
<!-- markers -->
<circle cx="226.500" cy="81" r="4.300" fill="#efe23c"/>
<text x="166" y="215" font-family="'Liberation Mono',monospace" font-size="18" font-weight="bold" fill="#f2f2f2" textLength="12" lengthAdjust="spacingAndGlyphs">2</text><path d="M179 204 l9 4.500 -9 4.500z" fill="#f2f2f2"/>
<text x="166" y="275" font-family="'Liberation Mono',monospace" font-size="18" font-weight="bold" fill="#f2f2f2" textLength="12" lengthAdjust="spacingAndGlyphs">3</text><path d="M179 264 l9 4.500 -9 4.500z" fill="#f2f2f2"/>
<text x="0.500" y="36.500" font-size="17" font-weight="bold" fill="#e2e2e2" textLength="65" lengthAdjust="spacing">7.5LA/</text><text x="76.500" y="36.500" font-size="17" font-weight="bold" fill="#e2e2e2" textLength="43" lengthAdjust="spacing">10/A</text>
<text x="0.500" y="55.500" font-size="17" font-weight="bold" fill="#e2e2e2"><tspan fill="#4a4a50">P</tspan></text><text x="11.300" y="55.500" font-size="17" font-weight="bold" fill="#e2e2e2" textLength="32" lengthAdjust="spacing">ROF</text><text x="65.500" y="55.500" font-size="17" font-weight="bold" fill="#e2e2e2" textLength="43" lengthAdjust="spacing">37.1</text><text x="119.500" y="55.500" font-size="17" font-weight="bold" fill="#e2e2e2" textLength="21" lengthAdjust="spacing">mm</text>
<!-- measurement lines -->
<path d="M328 293.500 H357 l2 1 H385 l2 1 H430 l2 1 H455" stroke="#a89a08" stroke-width="2.300" fill="none"/>
<path d="M328 299.500 H342 l2 1 H368 l2 .5 H398 l2 .5 H454" stroke="#22c422" stroke-width="2.200" fill="none"/>
</svg>
<!--USEND-->

<!-- RIGHT PANELS -->
<div class="panel" style="left:1456px;top:157px;width:170px;height:69px;border-radius:9px;"></div>
<div class="phead" style="left:1457px;top:157px;width:158px;border-radius:8px 0 22px 0/8px 0 23px 0;">Outils</div>
<div class="qm" style="left:1591px;top:159px;">?</div>
<div class="btn" style="left:1466px;top:187px;width:150px;">Calibration</div>

<div class="panel" style="left:1456px;top:233px;width:170px;height:149px;border-radius:9px;"></div>
<div class="phead" style="left:1457px;top:233px;width:158px;border-radius:8px 0 22px 0/8px 0 23px 0;">Mesures</div>
<div class="qm" style="left:1591px;top:235px;">?</div>
<div class="btn" style="left:1466px;top:277px;width:150px;">EIM</div>
<div class="btn" style="left:1466px;top:309px;width:150px;">Distance</div>
<div class="btn" style="left:1466px;top:341px;width:150px;">Surface</div>

<div class="panel" style="left:1456px;top:389px;width:170px;height:337px;border-radius:9px;"></div>
<div class="phead" style="left:1457px;top:389px;width:158px;border-radius:8px 0 22px 0/8px 0 23px 0;">Tronçon</div>
<svg class="abs" style="left:1456px;top:410px" width="170" height="320" viewBox="0 0 170 320">
<defs>
<linearGradient id="agr" x1="0" y1="0" x2="1" y2="0"><stop offset="0" stop-color="#8e8e8e"/><stop offset=".45" stop-color="#bdbdbd"/><stop offset="1" stop-color="#8a8a8a"/></linearGradient>
<linearGradient id="ard" x1="0" y1="0" x2="1" y2="0"><stop offset="0" stop-color="#d81c38"/><stop offset=".35" stop-color="#ea3a52"/><stop offset="1" stop-color="#d01a34"/></linearGradient>
</defs>
<!-- vertebral artery (behind) -->
<path d="M122.800 107 L117.300 134 Q113 152 108 166 Q100 186 86.800 210 Q74 232 60 248" fill="none" stroke="#555" stroke-width="9" stroke-linecap="butt"/>
<path d="M122.800 107 L117.300 134 Q113 152 108 166 Q100 186 86.800 210 Q74 232 60 248" fill="none" stroke="#a9a9a9" stroke-width="7.400"/>
<path d="M121.600 107 L116 134 Q112 152 107 166 Q99 186 85.600 210 Q73 232 59 248" fill="none" stroke="#c4c4c4" stroke-width="2.500" opacity=".8"/>
<ellipse cx="122.800" cy="106.600" rx="4.600" ry="3.200" fill="#5a5a5a" stroke="#444" stroke-width=".800"/>
<g fill="#d9cfa0" stroke="#7a7456" stroke-width=".800"><path d="M113.500 116 q8.500 2.500 17 0 q1.500 4 0 8 q-8.500 -2.500 -17 0 q-1.500 -4 0 -8z"/><path d="M108 139 q8.500 2.500 17 0 q1.500 4 0 8 q-8.500 -2.500 -17 0 q-1.500 -4 0 -8z"/><path d="M101 162.500 q8.500 2.500 17 0 q1.500 4 0 8 q-8.500 -2.500 -17 0 q-1.500 -4 0 -8z"/></g>
<!-- subclavian / brachiocephalic (gray) -->
<path d="M18 242 Q40 243 55 247 Q64 250 70 258 L74.600 259 L88.400 255 L105 289.500 L90 297.500 Q80 280 67 268 Q56 258 45 256 L18 253.500Z" fill="url(#agr)" stroke="#4a4a4a" stroke-width=".900"/>
<ellipse cx="16.800" cy="247.600" rx="4.200" ry="6.200" fill="#4c4c4c" stroke="#333" stroke-width=".800" transform="rotate(-8 16.800 247.600)"/>
<ellipse cx="97.500" cy="293.800" rx="8.400" ry="5.200" fill="#444" stroke="#2e2e2e" stroke-width=".800" transform="rotate(-28 97.500 293.800)"/>
<path d="M61.900 251 L70 241 L76 259.500Z" fill="#fff" stroke="#3a3a3a" stroke-width=".900" stroke-linejoin="round"/>
<!-- external carotid (gray) -->
<path d="M77.700 101 Q76 90 74.400 80" fill="none" stroke="#444" stroke-width="3.600" stroke-linecap="round"/><path d="M77.700 101 Q76 90 74.400 80" fill="none" stroke="#a5a5a5" stroke-width="2.200" stroke-linecap="round"/>
<path d="M82 107 Q86 104 91.400 102" fill="none" stroke="#444" stroke-width="3.600" stroke-linecap="round"/><path d="M82 107 Q86 104 91.400 102" fill="none" stroke="#a5a5a5" stroke-width="2.200" stroke-linecap="round"/>
<path d="M68.500 117 Q76 108 78 98 L80.500 82 L89 84 L86 100 Q84 112 82 122Z" fill="url(#agr)" stroke="#4a4a4a" stroke-width=".900"/>
<ellipse cx="84.700" cy="83" rx="4.400" ry="3.200" fill="#4c4c4c" stroke="#333" stroke-width=".800" transform="rotate(12 84.700 83)"/>
<!-- red carotid -->
<path d="M62.500 24 Q61.500 40 61 55 Q58 70 54 82 Q51 95 50 107 Q45 113 45.700 120 Q46 126 47 131 Q52 145 55 158 Q59 177 61 195 Q64 215 67.600 231.500 L74.600 259 L88.400 255 L83.800 237.600 Q79 220 76.800 207 Q74 190 74.600 177 Q75 168 76 158 Q79 147 80.700 137 Q82 128 82 122 L68.500 117 Q64 108 64 97.500 Q66 88 68.500 79 Q72 66 74 55 Q75.500 40 76 26Z" fill="url(#ard)" stroke="#5a1a20" stroke-width=".900"/>
<ellipse cx="69.200" cy="23.800" rx="6.700" ry="4.300" fill="#f08a98" stroke="#7a2a30" stroke-width=".900"/>
<path d="M51 120 L68 117 M55 177 L75 175" stroke="#6a1a20" stroke-width=".500" stroke-dasharray="1.500 1.200" fill="none"/>
<path d="M45 123 q-1.500 -6 2 -9 q2 -3 4.500 -1 q2 2 1 5 q2.500 3 1 6.500 q-4 2.500 -8.500 -1.500z" fill="#f08a20" stroke="#8a4a10" stroke-width=".800"/>
<text transform="translate(84 228) rotate(72)" font-family="'Liberation Sans',sans-serif" font-size="4.600" fill="#333">© 2011 IntimaMedia.com</text>
</svg>


<div class="panel" style="left:1456px;top:733px;width:170px;height:69px;border-radius:9px;"></div>
<div class="phead" style="left:1457px;top:733px;width:158px;border-radius:8px 0 22px 0/8px 0 23px 0;">Données</div>
<div class="btn" style="left:1466px;top:769px;width:150px;">Toutes les mesures</div>

</div></div>
<!-- RIGHT DARK BAR + SCROLLBARS -->
<div class="abs" style="left:1634px;top:157px;width:18px;height:851px;background:#fff;"></div>
<div class="abs" style="left:1635px;top:157px;width:16px;height:816px;background:linear-gradient(90deg,#ececec,#f7f7f7 40%,#fbfbfb);"></div>
<div class="abs" style="left:1635px;top:157px;width:16px;height:15px;box-sizing:border-box;border:1px solid #c9c9c9;background:#f4f4f4;"></div>
<div class="abs" style="left:1635px;top:957px;width:16px;height:15px;box-sizing:border-box;border:1px solid #c9c9c9;background:#f4f4f4;"></div>
<svg class="abs" style="left:1635px;top:157px" width="16" height="816" viewBox="0 0 16 816"><path d="M4.500 9.500 h7 l-3.500-4z" fill="#8a8a8a"/><path d="M4.500 805.500 h7 l-3.500 4z" fill="#7a7a7a"/></svg>
<div class="abs" style="left:1652px;top:56px;width:10px;height:952px;background:linear-gradient(180deg,#5f0d0f 0,#640e10 420px,#7a0e12 530px,#a40f17 610px,#d4121c 670px,#e2502e 735px,#ea845e 800px,#f3b8a2 875px,#fbe6de 952px);"></div>
<div class="abs" style="left:1662px;top:56px;width:18px;height:952px;background:linear-gradient(90deg,#e4e4e4,#f3f3f3 40%,#f8f8f8);"></div>
<div class="abs" style="left:1662px;top:56px;width:17px;height:17px;box-sizing:border-box;border:1px solid #cfcfcf;background:#f6f6f6;"></div>
<div class="abs" style="left:1662px;top:991px;width:17px;height:17px;box-sizing:border-box;border:1px solid #cfcfcf;background:#f6f6f6;"></div>
<svg class="abs" style="left:1662px;top:56px" width="18" height="952" viewBox="0 0 18 952"><path d="M5 11 h7 l-3.500-4z" fill="#8a8a8a"/><path d="M5 941 h7 l-3.500 4z" fill="#6a6a6a"/></svg>

<!-- TASKBAR -->
<div id="task" class="abs"></div>
<div class="abs" style="left:0;top:1008px;width:1680px;height:1px;background:#e4e6dc;"></div>
<div class="abs" style="left:0;top:1009px;width:1680px;height:1px;background:#4c5626;"></div>
<div class="abs" style="left:0;top:1010px;width:1680px;height:1px;background:rgba(210,220,170,.55);"></div>
<!-- tray grey blur -->
<div class="abs" style="left:1440px;top:1011px;width:205px;height:39px;background:linear-gradient(90deg,rgba(170,172,160,0),rgba(176,177,170,.95) 14px,rgba(180,181,176,.95) 170px,rgba(170,172,160,0));"></div>
<div class="abs" style="left:1666px;top:1011px;width:14px;height:39px;box-sizing:border-box;border:1px solid #39421a;border-right:0;background:linear-gradient(135deg,#7b8a45,#54612a 50%,#6d7a3a);"></div>
<!-- start orb -->
<div class="abs" style="left:8px;top:1011px;width:38px;height:38px;border-radius:19px;background:radial-gradient(circle at 50% 35%,#6fb4ea 0,#2b74c4 45%,#123e86 75%,#0b234f 100%);box-shadow:0 0 0 1px #1b2b3b,0 0 3px 1px rgba(20,40,10,.7);"></div>
<div class="abs" style="left:10px;top:1012px;width:34px;height:18px;border-radius:17px 17px 12px 12px/16px 16px 6px 6px;background:linear-gradient(180deg,rgba(255,255,255,.55),rgba(255,255,255,.08));"></div>
<svg class="abs" style="left:14px;top:1017px" width="27" height="26" viewBox="0 0 27 26"><path d="M3.500 5.500 Q8 3 12.500 5.500 L11 12.500 Q7 10.500 2 12.800Z" fill="#e8542c"/><path d="M14 6 Q18.500 8.500 24 5.500 L22.500 12.500 Q17.500 15 12.500 12.800Z" fill="#7fc242"/><path d="M1.800 14.200 Q6.500 12 10.800 14 L9.500 21 Q5.500 19 0.500 21.200Z" fill="#3a9be0"/><path d="M12.200 14.500 Q17 17 22.200 14 L20.800 21 Q16 23.500 10.800 21.200Z" fill="#f7c52c"/></svg>
<!-- IE button (active) -->
<div class="tbtn" style="left:60px;top:1011px;background:linear-gradient(180deg,rgba(255,255,255,.62),rgba(255,255,255,.42) 50%,rgba(255,255,255,.3) 51%,rgba(255,255,255,.5));"></div>
<svg class="abs" style="left:72px;top:1013px" width="34" height="34" viewBox="0 0 34 34"><path d="M5 24 C1 31 8 32 15 27" fill="none" stroke="#f4bd1c" stroke-width="2.400"/><path d="M10 18.200 H26.800 A9.300 9.300 0 1 0 25.300 23.400" fill="none" stroke="#3fa2e8" stroke-width="5"/><path d="M4 18 C8 8 22 0 30 3.500 C33 5.500 31 10 29 12" fill="none" stroke="#f4bd1c" stroke-width="2.600"/></svg>
<!-- chrome icon -->
<svg class="abs" style="left:136px;top:1015px" width="30" height="30" viewBox="0 0 30 30"><circle cx="15" cy="15" r="14" fill="#e23c2c"/><path d="M15 15 L2.900 8 A14 14 0 0 0 10.500 28.300 L17 17Z" fill="#2ea44c"/><path d="M15 15 L10.500 28.300 A14 14 0 0 0 27.100 8 L15 8Z" fill="#f7cb2c"/><path d="M15 15 L2.900 8 A14 14 0 0 1 27.100 8 Z" fill="#e23c2c"/><circle cx="15" cy="15" r="6.400" fill="#fff"/><circle cx="15" cy="15" r="5" fill="#4a90e0"/></svg>
<!-- gimp button -->
<div class="tbtn" style="left:184px;top:1011px;"></div>
<svg class="abs" style="left:195px;top:1016px" width="36" height="30" viewBox="0 0 36 30"><path d="M4 12 Q4 2 9 6 Q14 3 20 7 Q26 1 27 4 Q28 12 24 18 Q20 25 11 22 Q5 20 4 12Z" fill="#6a6456" stroke="#2e2a22" stroke-width="1"/><ellipse cx="6" cy="13.500" rx="4.500" ry="3.600" fill="#111"/><circle cx="12" cy="10" r="2.400" fill="#fff"/><circle cx="18" cy="10" r="2.400" fill="#fff"/><circle cx="12.400" cy="10.300" r="1" fill="#111"/><circle cx="18.400" cy="10.300" r="1" fill="#111"/><path d="M18 19 L30 25" stroke="#c88a2c" stroke-width="2"/><path d="M28 23.500 L34 27.500" stroke="#333" stroke-width="2.400"/></svg>
<!-- word button -->
<div class="tbtn" style="left:246px;top:1011px;"></div>
<div class="abs" style="left:261px;top:1016px;width:28px;height:28px;box-sizing:border-box;border:1px solid #1d3f9a;background:linear-gradient(135deg,#fff 0,#e8eefb 40%,#b9c9ee 100%);"></div>
<div class="abs" style="left:262px;top:1014px;width:26px;height:30px;text-align:center;font-family:'Liberation Sans',sans-serif;font-weight:bold;font-style:italic;font-size:23px;line-height:32px;color:#2348b4;letter-spacing:-1px;">W</div>
<!-- tray -->
<div class="abs" style="left:1463px;top:1020px;font-size:12px;color:#f4f4ec;letter-spacing:-.2px;">FR</div>
<svg class="abs" style="left:1490px;top:1020px" width="95" height="22" viewBox="0 0 95 22"><path d="M3 13.500 h8 l-4-4.500z" fill="#f2f2f8" stroke="#8a8a98" stroke-width=".600"/><path d="M25 8 h3 l5-4.500 v15 l-5-4.500 h-3z" fill="#f4f4f4" stroke="#4a4a4a" stroke-width=".800"/><circle cx="36" cy="14.500" r="4" fill="#fff" stroke="#d81818" stroke-width="1.700"/><path d="M33.300 11.800 l5.400 5.400" stroke="#d81818" stroke-width="1.700"/><path d="M50.500 3 v17" stroke="#f4f4f4" stroke-width="2.200"/><path d="M49 3 v17 M52 3 v17" stroke="#555" stroke-width=".500"/><path d="M52 4.500 q4-2 7 0 t7 0 q-1 5 -5 7 q-4-2 -9 0z" fill="#f6f6f6" stroke="#555" stroke-width=".700"/><rect x="79" y="6.500" width="11" height="10" fill="#b9b9b9" stroke="#f4f4f4" stroke-width="1.600"/><path d="M80 20 h9 M84.500 17 v3" stroke="#f4f4f4" stroke-width="1.600"/><path d="M74.500 4 v6 h5 v-6 M77 10 v9" stroke="#f4f4f4" stroke-width="1.500" fill="none"/></svg>
<div class="abs" style="left:1585px;top:1014px;width:80px;text-align:center;font-size:12px;color:#fff;line-height:17px;letter-spacing:-.2px;">15:25<br>09/10/2012</div>

</body>
</html>
